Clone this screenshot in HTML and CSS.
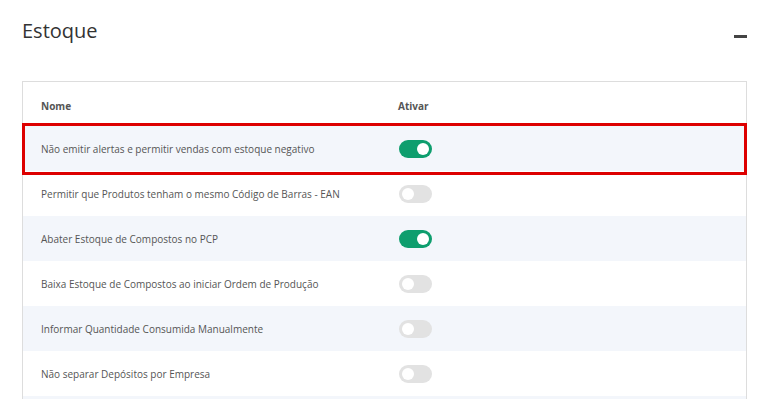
FILE: index.html
```html
<!DOCTYPE html>
<html lang="pt-BR">
<head>
    <meta charset="UTF-8">
    <meta name="viewport" content="width=device-width, initial-scale=1">
    <title>Estoque</title>
    <link rel="stylesheet" href="styles.css">
</head>
<body>
    <div class="section">
        <div class="section-header">
            <h2>Estoque</h2>
            <span class="collapse-icon"></span>
        </div>
        <div class="card">
            <div class="row head">
                <div class="cell">Nome</div>
                <div class="cell">Ativar</div>
            </div>
            <div class="row striped marked">
                <div class="cell">Não emitir alertas e permitir vendas com estoque negativo</div>
                <div class="cell"><span class="toggle on"></span></div>
            </div>
            <div class="row">
                <div class="cell">Permitir que Produtos tenham o mesmo Código de Barras - EAN</div>
                <div class="cell"><span class="toggle"></span></div>
            </div>
            <div class="row striped">
                <div class="cell">Abater Estoque de Compostos no PCP</div>
                <div class="cell"><span class="toggle on"></span></div>
            </div>
            <div class="row">
                <div class="cell">Baixa Estoque de Compostos ao iniciar Ordem de Produção</div>
                <div class="cell"><span class="toggle"></span></div>
            </div>
            <div class="row striped">
                <div class="cell">Informar Quantidade Consumida Manualmente</div>
                <div class="cell"><span class="toggle"></span></div>
            </div>
            <div class="row">
                <div class="cell">Não separar Depósitos por Empresa</div>
                <div class="cell"><span class="toggle"></span></div>
            </div>
            <div class="row striped"></div>
        </div>
    </div>
</body>
</html>
```

FILE: styles.css
```css
html, body {
    margin: 0;
    padding: 0;
}

body {
    font-family: 'Open Sans', sans-serif;
    color: #555;
    background: #fff;
    overflow: hidden;
}

.section {
    padding: 0 22px;
}

.section-header {
    display: flex;
    align-items: center;
    justify-content: space-between;
    height: 64px;
}

    .section-header h2 {
        margin: 0;
        font-size: 20px;
        font-weight: 400;
        color: #333;
        line-height: 1;
        padding-bottom: 2px;
    }

    .section-header .collapse-icon {
        width: 13px;
        height: 3px;
        background: #444;
        margin-top: 8px;
    }

.card {
    margin-top: 17px;
    border: 1px solid #dddddd;
}

.row {
    display: grid;
    grid-template-columns: 357px 1fr;
    align-items: center;
    height: 45px;
    font-size: 10px;
    position: relative;
}

    .row .cell {
        padding-left: 18px;
    }

    .row.head {
        height: 44px;
        padding-top: 3px;
        box-sizing: border-box;
        font-weight: 700;
        color: #555;
    }

    .row.striped {
        background: #f3f6fb;
    }

    .row.marked::after {
        content: "";
        position: absolute;
        top: -3px;
        bottom: -4px;
        left: -1px;
        right: -1px;
        border: 3px solid #dd0000;
        pointer-events: none;
    }

.toggle {
    display: block;
    position: relative;
    width: 33px;
    height: 18px;
    border-radius: 9px;
    background: #e2e2e2;
    margin-left: 1px;
}

    .toggle::before {
        content: "";
        position: absolute;
        top: 3px;
        left: 3px;
        width: 12px;
        height: 12px;
        border-radius: 50%;
        background: #fff;
    }

    .toggle.on {
        background: #0e9e6e;
    }

        .toggle.on::before {
            left: auto;
            right: 3px;
        }
```
